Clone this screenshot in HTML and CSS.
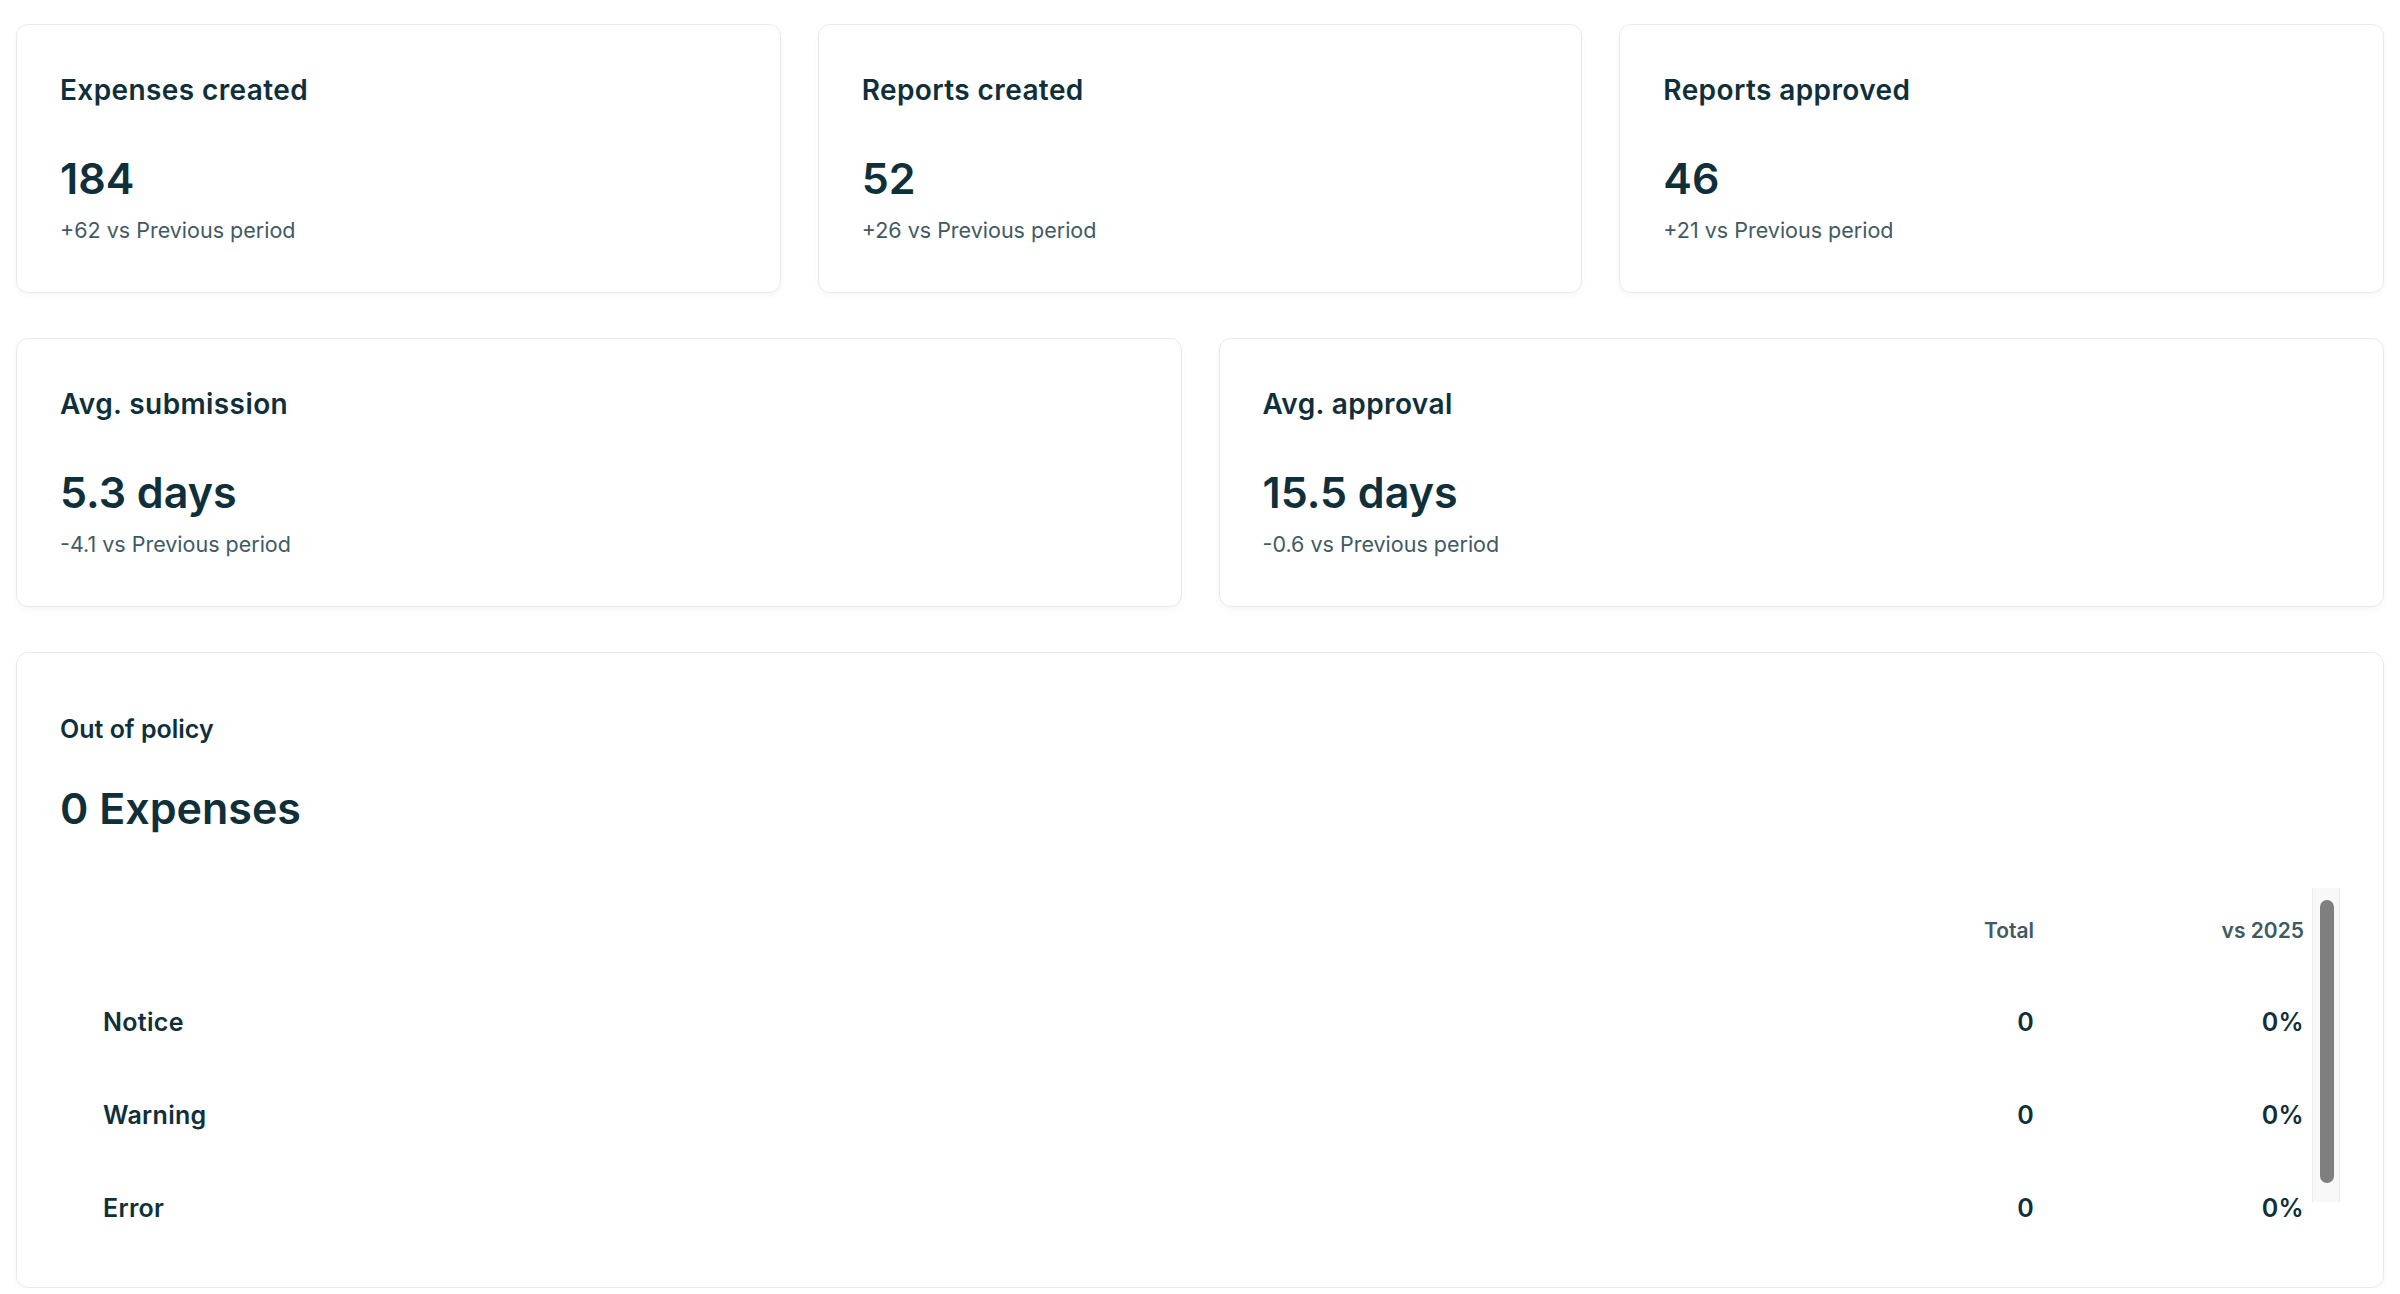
FILE: index.html
```html
<!DOCTYPE html>
<html lang="en">
<head>
    <meta charset="UTF-8">
    <meta name="viewport" content="width=device-width, initial-scale=1.0">
    <title>Expense insights</title>
    <link rel="stylesheet" href="styles.css">
</head>
<body>
    <main class="dashboard">
        <div class="card stat third">
            <div class="stat-title">Expenses created</div>
            <div class="stat-value">184</div>
            <div class="stat-delta">+62 vs Previous period</div>
        </div>
        <div class="card stat third">
            <div class="stat-title">Reports created</div>
            <div class="stat-value">52</div>
            <div class="stat-delta">+26 vs Previous period</div>
        </div>
        <div class="card stat third">
            <div class="stat-title">Reports approved</div>
            <div class="stat-value">46</div>
            <div class="stat-delta">+21 vs Previous period</div>
        </div>

        <div class="card stat half">
            <div class="stat-title">Avg. submission</div>
            <div class="stat-value">5.3 days</div>
            <div class="stat-delta">-4.1 vs Previous period</div>
        </div>
        <div class="card stat half">
            <div class="stat-title">Avg. approval</div>
            <div class="stat-value">15.5 days</div>
            <div class="stat-delta">-0.6 vs Previous period</div>
        </div>

        <div class="card policy full">
            <div class="policy-title">Out of policy</div>
            <div class="stat-value policy-value">0 Expenses</div>
            <div class="policy-body">
                <table class="policy-table">
                    <thead>
                        <tr>
                            <th class="col-name"></th>
                            <th class="col-num">Total</th>
                            <th class="col-num">vs 2025</th>
                        </tr>
                    </thead>
                    <tbody>
                        <tr>
                            <td class="col-name">Notice</td>
                            <td class="col-num">0</td>
                            <td class="col-num">0%</td>
                        </tr>
                        <tr>
                            <td class="col-name">Warning</td>
                            <td class="col-num">0</td>
                            <td class="col-num">0%</td>
                        </tr>
                        <tr>
                            <td class="col-name">Error</td>
                            <td class="col-num">0</td>
                            <td class="col-num">0%</td>
                        </tr>
                    </tbody>
                </table>
                <div class="scroll-track"><div class="scroll-thumb"></div></div>
            </div>
        </div>
    </main>
</body>
</html>
```

FILE: styles.css
```css
body, html {
    margin: 0;
    padding: 0;
    background-color: #ffffff;
}

body {
    font-family: Inter, "Noto Sans", sans-serif;
    color: #0f2f3b;
}

.dashboard {
    display: grid;
    grid-template-columns: repeat(6, 1fr);
    gap: 45px 37px;
    padding: 24px 16px 0 16px;
}

.card {
    background: #fff;
    border: 1px solid #e8eaea;
    border-radius: 12px;
    box-shadow: 0 3px 6px rgba(0, 0, 0, 0.035);
}

.third { grid-column: span 2; }
.half { grid-column: span 3; }
.full { grid-column: span 6; }

.stat {
    padding: 47px 43px;
}

.stat-title {
    font-size: 28px;
    line-height: 36px;
    font-weight: 600;
    letter-spacing: 0.4px;
    margin-bottom: 44px;
}

.stat-value {
    font-size: 43px;
    line-height: 53px;
    font-weight: 600;
    margin-bottom: 10px;
}

.stat-delta {
    font-size: 21.5px;
    line-height: 30px;
    color: #3f5a63;
}

.policy {
    padding: 58px 43px 33px 43px;
}

.policy-title {
    font-size: 25px;
    line-height: 36px;
    font-weight: 600;
    margin-bottom: 35px;
}

.policy-value {
    margin-bottom: 50px;
}

.policy-body {
    display: flex;
    align-items: flex-start;
}

.policy-table {
    flex: 1;
    border-collapse: collapse;
}

.policy-table th {
    height: 90px;
    padding: 0;
    font-size: 21px;
    font-weight: 600;
    color: #3f5a63;
}

.policy-table td {
    height: 93px;
    padding: 0;
    font-size: 25px;
    font-weight: 600;
    letter-spacing: 0.3px;
}

.policy-table .col-name {
    text-align: left;
    padding-left: 43px;
}

.policy-table .col-num {
    width: 262px;
    text-align: right;
    padding-right: 8px;
}

.scroll-track {
    width: 28px;
    height: 314px;
    margin-top: 3px;
    background: #f8f8f8;
    border-left: 1px solid #ebebeb;
    border-right: 1px solid #ebebeb;
    padding-top: 12px;
    box-sizing: border-box;
}

.scroll-thumb {
    width: 14px;
    height: 283px;
    margin-left: 7px;
    border-radius: 7px;
    background: #7f7f7f;
}
```
